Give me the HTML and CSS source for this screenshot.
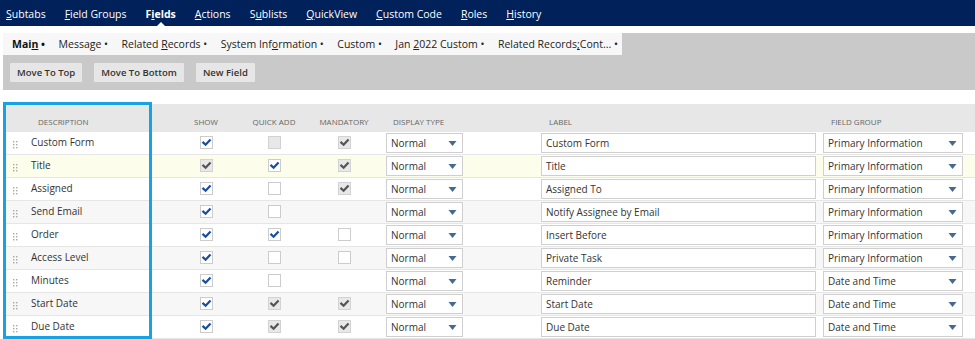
FILE: index.html
```html
<!DOCTYPE html>
<html>
<head>
<meta charset="utf-8">
<link rel="stylesheet" href="styles.css">
</head>
<body>
<div class="page">
  <nav class="topnav">
    <span class="nav-item"><u>S</u>ubtabs</span>
    <span class="nav-item"><u>F</u>ield Groups</span>
    <span class="nav-item active">F<u>i</u>elds</span>
    <span class="nav-item"><u>A</u>ctions</span>
    <span class="nav-item">S<u>u</u>blists</span>
    <span class="nav-item"><u>Q</u>uickView</span>
    <span class="nav-item"><u>C</u>ustom Code</span>
    <span class="nav-item"><u>R</u>oles</span>
    <span class="nav-item"><u>H</u>istory</span>
  </nav>
  <div class="body">
    <div class="subtabs-bar">
      <div class="subtabs">
        <span class="subtab active">Mai<u>n</u> •</span>
        <span class="subtab">Message •</span>
        <span class="subtab">Related <u>R</u>ecords •</span>
        <span class="subtab">System Inf<u>o</u>rmation •</span>
        <span class="subtab">Custom •</span>
        <span class="subtab">Jan <u>2</u>022 Custom •</span>
        <span class="subtab">Related Records<u>;</u>Cont... •</span>
      </div>
    </div>
    <div class="toolbar">
      <button class="btn">Move To Top</button>
      <button class="btn">Move To Bottom</button>
      <button class="btn">New Field</button>
    </div>
    <div class="grid">
      <div class="row head">
        <div class="c-handle"></div>
        <div class="c-desc">DESCRIPTION</div>
        <div class="c-chk">SHOW</div>
        <div class="c-chk">QUICK ADD</div>
        <div class="c-chk">MANDATORY</div>
        <div class="c-disp">DISPLAY TYPE</div>
        <div class="c-label">LABEL</div>
        <div class="c-group">FIELD GROUP</div>
      </div>

      <div class="row">
        <div class="c-handle"><svg class="grip" width="5" height="8" viewBox="0 0 5 8"><g fill="#a8a8a8"><rect x="0" y="0" width="1.4" height="1.4"/><rect x="3" y="0" width="1.4" height="1.4"/><rect x="0" y="3" width="1.4" height="1.4"/><rect x="3" y="3" width="1.4" height="1.4"/><rect x="0" y="6" width="1.4" height="1.4"/><rect x="3" y="6" width="1.4" height="1.4"/></g></svg></div>
        <div class="c-desc">Custom Form</div>
        <div class="c-chk"><span class="cb on"><svg viewBox="0 0 13 13"><path d="M3.3 6.6 L5.6 8.8 L9.8 4.2"/></svg></span></div>
        <div class="c-chk"><span class="cb dis"></span></div>
        <div class="c-chk"><span class="cb dis on"><svg viewBox="0 0 13 13"><path d="M3.3 6.6 L5.6 8.8 L9.8 4.2"/></svg></span></div>
        <div class="c-disp"><span class="sel sel-disp">Normal<svg class="arr" viewBox="0 0 8 5"><path d="M0 0 H8 L4 5 Z"/></svg></span></div>
        <div class="c-label"><span class="inp">Custom Form</span></div>
        <div class="c-group"><span class="sel sel-group">Primary Information<svg class="arr" viewBox="0 0 8 5"><path d="M0 0 H8 L4 5 Z"/></svg></span></div>
      </div>

      <div class="row hover">
        <div class="c-handle"><svg class="grip" width="5" height="8" viewBox="0 0 5 8"><g fill="#a8a8a8"><rect x="0" y="0" width="1.4" height="1.4"/><rect x="3" y="0" width="1.4" height="1.4"/><rect x="0" y="3" width="1.4" height="1.4"/><rect x="3" y="3" width="1.4" height="1.4"/><rect x="0" y="6" width="1.4" height="1.4"/><rect x="3" y="6" width="1.4" height="1.4"/></g></svg></div>
        <div class="c-desc">Title</div>
        <div class="c-chk"><span class="cb dis on"><svg viewBox="0 0 13 13"><path d="M3.3 6.6 L5.6 8.8 L9.8 4.2"/></svg></span></div>
        <div class="c-chk"><span class="cb on"><svg viewBox="0 0 13 13"><path d="M3.3 6.6 L5.6 8.8 L9.8 4.2"/></svg></span></div>
        <div class="c-chk"><span class="cb dis on"><svg viewBox="0 0 13 13"><path d="M3.3 6.6 L5.6 8.8 L9.8 4.2"/></svg></span></div>
        <div class="c-disp"><span class="sel sel-disp">Normal<svg class="arr" viewBox="0 0 8 5"><path d="M0 0 H8 L4 5 Z"/></svg></span></div>
        <div class="c-label"><span class="inp">Title</span></div>
        <div class="c-group"><span class="sel sel-group">Primary Information<svg class="arr" viewBox="0 0 8 5"><path d="M0 0 H8 L4 5 Z"/></svg></span></div>
      </div>

      <div class="row">
        <div class="c-handle"><svg class="grip" width="5" height="8" viewBox="0 0 5 8"><g fill="#a8a8a8"><rect x="0" y="0" width="1.4" height="1.4"/><rect x="3" y="0" width="1.4" height="1.4"/><rect x="0" y="3" width="1.4" height="1.4"/><rect x="3" y="3" width="1.4" height="1.4"/><rect x="0" y="6" width="1.4" height="1.4"/><rect x="3" y="6" width="1.4" height="1.4"/></g></svg></div>
        <div class="c-desc">Assigned</div>
        <div class="c-chk"><span class="cb on"><svg viewBox="0 0 13 13"><path d="M3.3 6.6 L5.6 8.8 L9.8 4.2"/></svg></span></div>
        <div class="c-chk"><span class="cb"></span></div>
        <div class="c-chk"><span class="cb dis on"><svg viewBox="0 0 13 13"><path d="M3.3 6.6 L5.6 8.8 L9.8 4.2"/></svg></span></div>
        <div class="c-disp"><span class="sel sel-disp">Normal<svg class="arr" viewBox="0 0 8 5"><path d="M0 0 H8 L4 5 Z"/></svg></span></div>
        <div class="c-label"><span class="inp">Assigned To</span></div>
        <div class="c-group"><span class="sel sel-group">Primary Information<svg class="arr" viewBox="0 0 8 5"><path d="M0 0 H8 L4 5 Z"/></svg></span></div>
      </div>

      <div class="row alt">
        <div class="c-handle"><svg class="grip" width="5" height="8" viewBox="0 0 5 8"><g fill="#a8a8a8"><rect x="0" y="0" width="1.4" height="1.4"/><rect x="3" y="0" width="1.4" height="1.4"/><rect x="0" y="3" width="1.4" height="1.4"/><rect x="3" y="3" width="1.4" height="1.4"/><rect x="0" y="6" width="1.4" height="1.4"/><rect x="3" y="6" width="1.4" height="1.4"/></g></svg></div>
        <div class="c-desc">Send Email</div>
        <div class="c-chk"><span class="cb on"><svg viewBox="0 0 13 13"><path d="M3.3 6.6 L5.6 8.8 L9.8 4.2"/></svg></span></div>
        <div class="c-chk"><span class="cb"></span></div>
        <div class="c-chk"></div>
        <div class="c-disp"><span class="sel sel-disp">Normal<svg class="arr" viewBox="0 0 8 5"><path d="M0 0 H8 L4 5 Z"/></svg></span></div>
        <div class="c-label"><span class="inp">Notify Assignee by Email</span></div>
        <div class="c-group"><span class="sel sel-group">Primary Information<svg class="arr" viewBox="0 0 8 5"><path d="M0 0 H8 L4 5 Z"/></svg></span></div>
      </div>

      <div class="row">
        <div class="c-handle"><svg class="grip" width="5" height="8" viewBox="0 0 5 8"><g fill="#a8a8a8"><rect x="0" y="0" width="1.4" height="1.4"/><rect x="3" y="0" width="1.4" height="1.4"/><rect x="0" y="3" width="1.4" height="1.4"/><rect x="3" y="3" width="1.4" height="1.4"/><rect x="0" y="6" width="1.4" height="1.4"/><rect x="3" y="6" width="1.4" height="1.4"/></g></svg></div>
        <div class="c-desc">Order</div>
        <div class="c-chk"><span class="cb on"><svg viewBox="0 0 13 13"><path d="M3.3 6.6 L5.6 8.8 L9.8 4.2"/></svg></span></div>
        <div class="c-chk"><span class="cb on"><svg viewBox="0 0 13 13"><path d="M3.3 6.6 L5.6 8.8 L9.8 4.2"/></svg></span></div>
        <div class="c-chk"><span class="cb"></span></div>
        <div class="c-disp"><span class="sel sel-disp">Normal<svg class="arr" viewBox="0 0 8 5"><path d="M0 0 H8 L4 5 Z"/></svg></span></div>
        <div class="c-label"><span class="inp">Insert Before</span></div>
        <div class="c-group"><span class="sel sel-group">Primary Information<svg class="arr" viewBox="0 0 8 5"><path d="M0 0 H8 L4 5 Z"/></svg></span></div>
      </div>

      <div class="row alt">
        <div class="c-handle"><svg class="grip" width="5" height="8" viewBox="0 0 5 8"><g fill="#a8a8a8"><rect x="0" y="0" width="1.4" height="1.4"/><rect x="3" y="0" width="1.4" height="1.4"/><rect x="0" y="3" width="1.4" height="1.4"/><rect x="3" y="3" width="1.4" height="1.4"/><rect x="0" y="6" width="1.4" height="1.4"/><rect x="3" y="6" width="1.4" height="1.4"/></g></svg></div>
        <div class="c-desc">Access Level</div>
        <div class="c-chk"><span class="cb on"><svg viewBox="0 0 13 13"><path d="M3.3 6.6 L5.6 8.8 L9.8 4.2"/></svg></span></div>
        <div class="c-chk"><span class="cb"></span></div>
        <div class="c-chk"><span class="cb"></span></div>
        <div class="c-disp"><span class="sel sel-disp">Normal<svg class="arr" viewBox="0 0 8 5"><path d="M0 0 H8 L4 5 Z"/></svg></span></div>
        <div class="c-label"><span class="inp">Private Task</span></div>
        <div class="c-group"><span class="sel sel-group">Primary Information<svg class="arr" viewBox="0 0 8 5"><path d="M0 0 H8 L4 5 Z"/></svg></span></div>
      </div>

      <div class="row">
        <div class="c-handle"><svg class="grip" width="5" height="8" viewBox="0 0 5 8"><g fill="#a8a8a8"><rect x="0" y="0" width="1.4" height="1.4"/><rect x="3" y="0" width="1.4" height="1.4"/><rect x="0" y="3" width="1.4" height="1.4"/><rect x="3" y="3" width="1.4" height="1.4"/><rect x="0" y="6" width="1.4" height="1.4"/><rect x="3" y="6" width="1.4" height="1.4"/></g></svg></div>
        <div class="c-desc">Minutes</div>
        <div class="c-chk"><span class="cb on"><svg viewBox="0 0 13 13"><path d="M3.3 6.6 L5.6 8.8 L9.8 4.2"/></svg></span></div>
        <div class="c-chk"><span class="cb"></span></div>
        <div class="c-chk"></div>
        <div class="c-disp"><span class="sel sel-disp">Normal<svg class="arr" viewBox="0 0 8 5"><path d="M0 0 H8 L4 5 Z"/></svg></span></div>
        <div class="c-label"><span class="inp">Reminder</span></div>
        <div class="c-group"><span class="sel sel-group">Date and Time<svg class="arr" viewBox="0 0 8 5"><path d="M0 0 H8 L4 5 Z"/></svg></span></div>
      </div>

      <div class="row alt">
        <div class="c-handle"><svg class="grip" width="5" height="8" viewBox="0 0 5 8"><g fill="#a8a8a8"><rect x="0" y="0" width="1.4" height="1.4"/><rect x="3" y="0" width="1.4" height="1.4"/><rect x="0" y="3" width="1.4" height="1.4"/><rect x="3" y="3" width="1.4" height="1.4"/><rect x="0" y="6" width="1.4" height="1.4"/><rect x="3" y="6" width="1.4" height="1.4"/></g></svg></div>
        <div class="c-desc">Start Date</div>
        <div class="c-chk"><span class="cb on"><svg viewBox="0 0 13 13"><path d="M3.3 6.6 L5.6 8.8 L9.8 4.2"/></svg></span></div>
        <div class="c-chk"><span class="cb dis on"><svg viewBox="0 0 13 13"><path d="M3.3 6.6 L5.6 8.8 L9.8 4.2"/></svg></span></div>
        <div class="c-chk"><span class="cb dis on"><svg viewBox="0 0 13 13"><path d="M3.3 6.6 L5.6 8.8 L9.8 4.2"/></svg></span></div>
        <div class="c-disp"><span class="sel sel-disp">Normal<svg class="arr" viewBox="0 0 8 5"><path d="M0 0 H8 L4 5 Z"/></svg></span></div>
        <div class="c-label"><span class="inp">Start Date</span></div>
        <div class="c-group"><span class="sel sel-group">Date and Time<svg class="arr" viewBox="0 0 8 5"><path d="M0 0 H8 L4 5 Z"/></svg></span></div>
      </div>

      <div class="row">
        <div class="c-handle"><svg class="grip" width="5" height="8" viewBox="0 0 5 8"><g fill="#a8a8a8"><rect x="0" y="0" width="1.4" height="1.4"/><rect x="3" y="0" width="1.4" height="1.4"/><rect x="0" y="3" width="1.4" height="1.4"/><rect x="3" y="3" width="1.4" height="1.4"/><rect x="0" y="6" width="1.4" height="1.4"/><rect x="3" y="6" width="1.4" height="1.4"/></g></svg></div>
        <div class="c-desc">Due Date</div>
        <div class="c-chk"><span class="cb on"><svg viewBox="0 0 13 13"><path d="M3.3 6.6 L5.6 8.8 L9.8 4.2"/></svg></span></div>
        <div class="c-chk"><span class="cb dis on"><svg viewBox="0 0 13 13"><path d="M3.3 6.6 L5.6 8.8 L9.8 4.2"/></svg></span></div>
        <div class="c-chk"><span class="cb dis on"><svg viewBox="0 0 13 13"><path d="M3.3 6.6 L5.6 8.8 L9.8 4.2"/></svg></span></div>
        <div class="c-disp"><span class="sel sel-disp">Normal<svg class="arr" viewBox="0 0 8 5"><path d="M0 0 H8 L4 5 Z"/></svg></span></div>
        <div class="c-label"><span class="inp">Due Date</span></div>
        <div class="c-group"><span class="sel sel-group">Date and Time<svg class="arr" viewBox="0 0 8 5"><path d="M0 0 H8 L4 5 Z"/></svg></span></div>
      </div>
    </div>
  </div>
  <div class="highlight"></div>
</div>
</body>
</html>
```

FILE: styles.css
```css
* { box-sizing: border-box; }
html, body { margin: 0; padding: 0; background: #ffffff; }
body {
  font-family: "Open Sans", "Liberation Sans", sans-serif;
  font-size: 10px;
  color: #333333;
  width: 975px;
  height: 339px;
  overflow: hidden;
}
.page { position: relative; width: 975px; height: 339px; }

.topnav {
  height: 26px;
  background: #00215a;
  display: flex;
  align-items: center;
  gap: 19px;
  padding-left: 6px;
  margin-bottom: 7px;
}
.nav-item {
  color: #ffffff;
  font-size: 10.5px;
  position: relative;
  line-height: 28px;
  height: 26px;
}
.nav-item u { text-underline-offset: 1px; }
.nav-item.active { font-weight: 700; }
.nav-item.active::after {
  content: "";
  position: absolute;
  left: 50%;
  bottom: 0;
  margin-left: -4px;
  border-left: 4px solid transparent;
  border-right: 4px solid transparent;
  border-bottom: 4px solid #ffffff;
}

.body { padding-left: 3px; }

.subtabs-bar {
  height: 22px;
  background: #c9c9c9;
  display: flex;
}
.subtabs {
  width: 619px;
  background: #f7f7f7;
  display: flex;
  align-items: center;
  gap: 13.5px;
  padding-left: 9px;
  font-size: 10.5px;
  color: #222222;
}
.subtab.active { font-weight: 700; color: #111111; }

.toolbar {
  height: 35px;
  background: #c9c9c9;
  display: flex;
  align-items: flex-start;
  gap: 12px;
  padding: 8px 7px 0;
}
.btn {
  height: 19px;
  border: 0;
  background: #e6e6e6;
  font-family: "Open Sans", "Liberation Sans", sans-serif;
  font-size: 9.5px;
  font-weight: 600;
  color: #333333;
  padding: 0 7px;
  border-radius: 1px;
}

.grid { margin-top: 14px; }
.row {
  display: grid;
  grid-template-columns: 25px 157px 42px 94px 46px 174px 282px 1fr;
  height: 23px;
  align-items: center;
  border-bottom: 1px solid #e6e6e6;
  background: #ffffff;
}
.row.alt { background: #f7f7f7; }
.row.hover { background: #fdfdec; }
.row.head {
  height: 28px;
  background: #e7e7e7;
  align-items: end;
  padding-bottom: 5px;
  border-bottom: 0;
  font-size: 8px;
  color: #666666;
  line-height: 10px;
}
.row.head .c-desc { padding-left: 10px; padding-bottom: 0; font-size: 8px; color: #666666; }
.row.head .c-chk { text-align: center; padding-bottom: 0; }
.row.head .c-disp { padding-left: 26px; }
.row.head .c-label { padding-left: 8px; }
.row.head .c-group { padding-left: 8px; }

.c-handle { padding-left: 10px; display: flex; align-items: center; padding-top: 3px; }
.c-desc { padding-left: 3px; padding-bottom: 3px; font-size: 10px; color: #333333; white-space: nowrap; }
.c-chk { display: flex; justify-content: center; padding-bottom: 1px; }
.c-disp { padding-left: 19px; }
.c-label, .c-group { display: flex; }

.cb {
  width: 13px;
  height: 13px;
  border: 1px solid #cccccc;
  background: #ffffff;
  display: block;
  position: relative;
}
.cb svg { position: absolute; left: -1px; top: -1px; width: 13px; height: 13px; }
.cb path { fill: none; stroke: #1b4f9c; stroke-width: 2.2; stroke-linecap: square; stroke-linejoin: miter; }
.cb.dis { background: #e8e8e8; border-color: #d2d2d2; }
.cb.dis path { stroke: #555555; }

.sel, .inp {
  height: 20px;
  border: 1px solid #cfcfcf;
  background: #ffffff;
  display: flex;
  align-items: center;
  padding-left: 4px;
  font-size: 10px;
  color: #333333;
  position: relative;
  white-space: nowrap;
}
.sel-disp { width: 77px; }
.inp { width: 275px; }
.sel-group { width: 140px; }
.arr {
  position: absolute;
  right: 5px;
  top: 7px;
  width: 9px;
  height: 5px;
}
.arr path { fill: #48698f; }

.highlight {
  position: absolute;
  left: 3px;
  top: 102px;
  width: 149px;
  height: 237px;
  border: 3px solid #17a2e4;
  pointer-events: none;
}
```
